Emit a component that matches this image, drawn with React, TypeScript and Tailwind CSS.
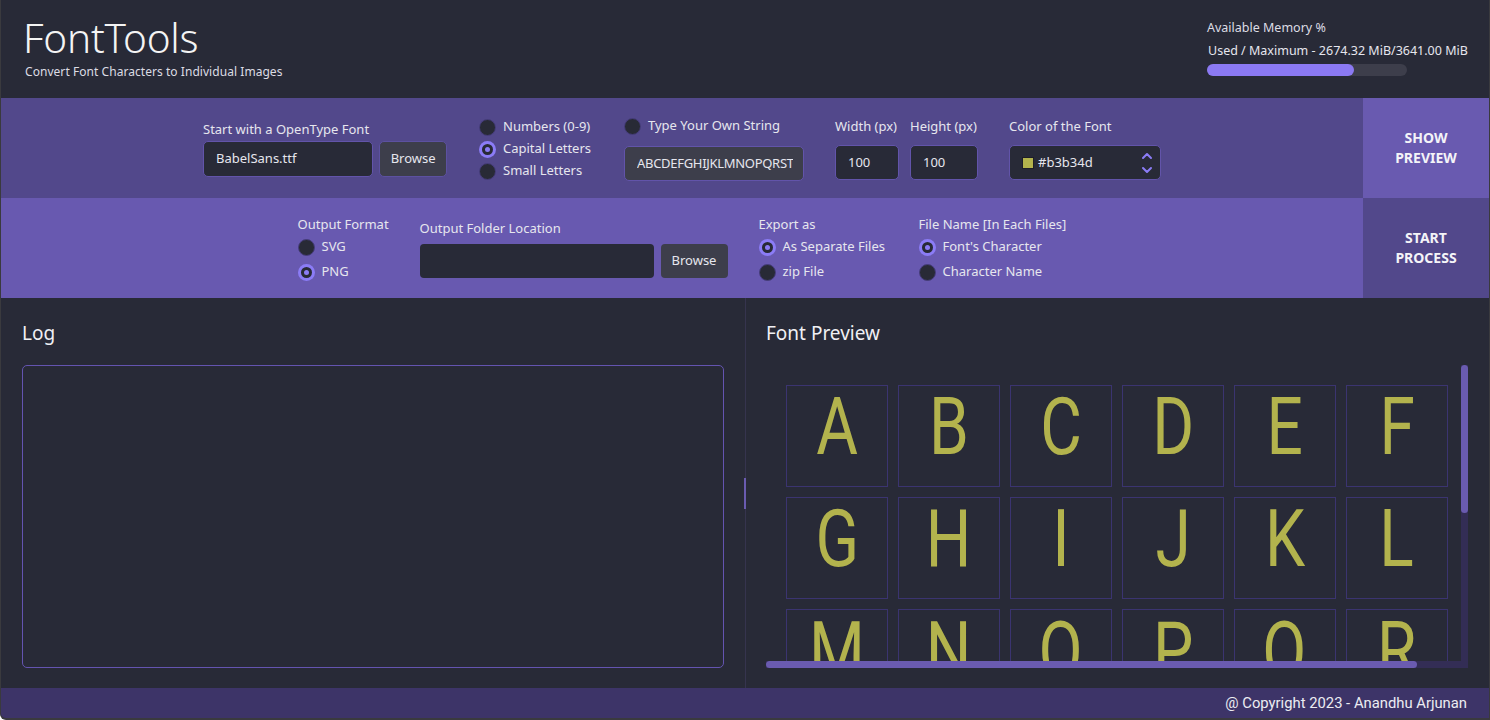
import React from "react";

const F = { fontFamily: '"Noto Sans", "Open Sans", sans-serif' };

function Radio({ checked }: { checked?: boolean }) {
  return checked ? (
    <span className="w-[17px] h-[17px] rounded-full bg-[#8b7cf6] flex items-center justify-center shrink-0">
      <span className="w-[11px] h-[11px] rounded-full bg-[#282a36] flex items-center justify-center">
        <span className="w-[5px] h-[5px] rounded-full bg-[#8b7cf6]" />
      </span>
    </span>
  ) : (
    <span className="w-[17px] h-[17px] rounded-full bg-[#282a36] border border-[#463d7c] shrink-0" />
  );
}

function RadioRow({ checked, label }: { checked?: boolean; label: string }) {
  return (
    <div className="flex items-center gap-[7px] h-[22px]">
      <Radio checked={checked} />
      <span className="text-[13px] text-[#e6e6ee] whitespace-nowrap">{label}</span>
    </div>
  );
}

const letters = "ABCDEFGHIJKLMNOPQR".split("");

export default function App() {
  return (
    <div
      className="w-[1490px] h-[720px] bg-[#282a37] flex flex-col overflow-hidden border-l border-r border-b-2 border-[#3a3a3e] rounded-bl-[6px] text-[#e6e6ee]"
      style={F}
    >
      {/* Header */}
      <div className="h-[98px] flex justify-between shrink-0">
        <div className="pl-[22px] pt-[13px] flex flex-col">
          <div className="text-[40.5px] leading-[49px] font-light text-[#f4f4f4] tracking-[-0.2px]">FontTools</div>
          <div className="text-[12px] leading-[16px] pl-[2px] mt-[2px] text-[#dcdce4] tracking-[0.05px]">
            Convert Font Characters to Individual Images
          </div>
        </div>
        <div className="pr-[21px] pt-[19px] w-[282px] flex flex-col">
          <div className="text-[12.5px] leading-[18px] text-[#dcdce4]">Available Memory %</div>
          <div className="text-[12.5px] leading-[18px] mt-[5px] pl-[1px] text-[#e6e6ee] whitespace-nowrap">
            Used / Maximum - 2674.32 MiB/3641.00 MiB
          </div>
          <div className="mt-[4px] w-[200px] h-[12px] rounded-full bg-[#3d3e4b]">
            <div className="h-full rounded-full bg-[#8b79f3]" style={{ width: "73.5%" }} />
          </div>
        </div>
      </div>

      {/* Row 1 */}
      <div className="h-[100px] flex shrink-0">
        <div className="flex-1 bg-[#52488b] flex items-start justify-center">
          <div className="w-[244px] pt-[22px] flex flex-col">
            <div className="text-[13px] leading-[18px] mb-[3px]">Start with a OpenType Font</div>
            <div className="flex gap-[6px]">
              <div className="w-[171px] h-[36px] rounded-[5px] bg-[#282a37] border border-[#6254aa] flex items-center pl-[12px] text-[13px]">
                BabelSans.ttf
              </div>
              <div className="w-[68px] h-[36px] rounded-[5px] bg-[#3d3e4b] border border-[#5c51a0] flex items-center justify-center text-[13px]">
                Browse
              </div>
            </div>
          </div>
          <div className="w-[113px] ml-[32px] pt-[18px] flex flex-col">
            <RadioRow label="Numbers (0-9)" />
            <RadioRow checked label="Capital Letters" />
            <RadioRow label="Small Letters" />
          </div>
          <div className="w-[180px] ml-[32px] pt-[17px] flex flex-col">
            <RadioRow label="Type Your Own String" />
            <div className="mt-[9px] w-[180px] h-[35px] rounded-[5px] bg-[#3d3e4b] border border-[#6254aa] flex items-center pl-[12px] pr-[10px] overflow-hidden">
              <span className="text-[13px] tracking-[-0.3px] whitespace-nowrap overflow-hidden">ABCDEFGHIJKLMNOPQRSTUVWXYZ</span>
            </div>
          </div>
          <div className="ml-[31px] pt-[19px] flex gap-[11px]">
            <div className="flex flex-col">
              <div className="text-[13px] leading-[18px] mb-[10px] whitespace-nowrap">Width (px)</div>
              <div className="w-[64px] h-[35px] rounded-[5px] bg-[#282a37] border border-[#6254aa] flex items-center pl-[12px] text-[13px]">100</div>
            </div>
            <div className="flex flex-col">
              <div className="text-[13px] leading-[18px] mb-[10px] whitespace-nowrap">Height (px)</div>
              <div className="w-[68px] h-[35px] rounded-[5px] bg-[#282a37] border border-[#6254aa] flex items-center pl-[12px] text-[13px]">100</div>
            </div>
          </div>
          <div className="ml-[31px] pt-[19px] flex flex-col">
            <div className="text-[13px] leading-[18px] mb-[10px]">Color of the Font</div>
            <div className="w-[152px] h-[35px] rounded-[5px] bg-[#282a37] border border-[#6254aa] flex items-center pl-[12px] pr-[6px] text-[13px]">
              <span className="w-[12px] h-[12px] bg-[#b3b34d] border border-[#1e1e28] mr-[4px]" />
              <span>#b3b34d</span>
              <svg className="ml-auto" width="14" height="26" viewBox="0 0 14 26" fill="none" stroke="#8b7cf6" strokeWidth="2" strokeLinecap="round" strokeLinejoin="round">
                <path d="M3 8 L7 4 L11 8" />
                <path d="M3 18 L7 22 L11 18" />
              </svg>
            </div>
          </div>
        </div>
        <div className="w-[126px] bg-[#695ab0] flex items-center justify-center text-center text-[14px] leading-[20px] font-bold text-[#f4f4f8]">
          SHOW
          <br />
          PREVIEW
        </div>
      </div>

      {/* Row 2 */}
      <div className="h-[100px] flex shrink-0">
        <div className="flex-1 bg-[#6859b0] flex items-start justify-center">
          <div className="w-[92px] pt-[17px] flex flex-col">
            <div className="text-[13px] leading-[18px] mb-[3px] whitespace-nowrap">Output Format</div>
            <div className="flex flex-col gap-[3px]">
              <RadioRow label="SVG" />
              <RadioRow checked label="PNG" />
            </div>
          </div>
          <div className="w-[308px] ml-[30px] pt-[21px] flex flex-col">
            <div className="text-[13px] leading-[18px] mb-[7px]">Output Folder Location</div>
            <div className="flex gap-[7px]">
              <div className="w-[234px] h-[34px] rounded-[4px] bg-[#282a37]" />
              <div className="w-[67px] h-[34px] rounded-[4px] bg-[#3d3e4b] flex items-center justify-center text-[13px]">Browse</div>
            </div>
          </div>
          <div className="w-[128px] ml-[31px] pt-[17px] flex flex-col">
            <div className="text-[13px] leading-[18px] mb-[3px]">Export as</div>
            <div className="flex flex-col gap-[3px]">
              <RadioRow checked label="As Separate Files" />
              <RadioRow label="zip File" />
            </div>
          </div>
          <div className="w-[148px] ml-[32px] pt-[17px] flex flex-col">
            <div className="text-[13px] leading-[18px] mb-[3px] whitespace-nowrap">File Name [In Each Files]</div>
            <div className="flex flex-col gap-[3px]">
              <RadioRow checked label="Font's Character" />
              <RadioRow label="Character Name" />
            </div>
          </div>
        </div>
        <div className="w-[126px] bg-[#52488b] flex items-center justify-center text-center text-[14px] leading-[20px] font-bold text-[#f4f4f8]">
          START
          <br />
          PROCESS
        </div>
      </div>

      {/* Main */}
      <div className="flex-1 flex min-h-0">
        <div className="w-[744px] flex flex-col pl-[21px] pr-[21px] pt-[20px] pb-[20px]">
          <div className="text-[19px] leading-[30px] text-[#f0f0f4]">Log</div>
          <div className="mt-[17px] flex-1 rounded-[5px] border border-[#6454b0]" />
        </div>
        <div className="w-[1px] bg-[#36344e] relative">
          <div className="absolute left-[-1px] top-[180px] w-[2px] h-[31px] bg-[#6a5bb0]" />
        </div>
        <div className="flex-1 flex flex-col pl-[20px] pr-[21px] pt-[20px] pb-[20px]">
          <div className="text-[19px] leading-[30px] text-[#f0f0f4]">Font Preview</div>
          <div className="mt-[17px] flex-1 relative overflow-hidden">
            <div className="pl-[20px] pt-[20px] grid grid-cols-[repeat(6,102px)] gap-[10px]">
              {letters.map((l) => (
                <div
                  key={l}
                  className="w-[102px] h-[102px] border border-[#3b3470] flex justify-center pt-[1px] overflow-hidden"
                >
                  <span
                    className="text-[80px] leading-[80px] text-[#b3b34d] scale-x-[0.8] inline-block"
                    style={{ fontFamily: 'Roboto, "Liberation Sans", sans-serif' }}
                  >
                    {l}
                  </span>
                </div>
              ))}
            </div>
            <div className="absolute right-0 top-0 bottom-0 w-[7px] bg-[#332d55]">
              <div className="w-full h-[148px] rounded-full bg-[#6a5bb0]" />
            </div>
            <div className="absolute left-0 right-0 bottom-0 h-[7px] bg-[#332d55]">
              <div className="h-full w-[651px] rounded-full bg-[#6a5bb0]" />
            </div>
          </div>
        </div>
      </div>

      {/* Footer */}
      <div className="h-[30px] shrink-0 bg-[#3d3468] flex items-center justify-end pr-[22px]">
        <span
          className="text-[14.8px] text-[#ececf2]"
          style={{ fontFamily: 'Roboto, "Noto Sans", sans-serif' }}
        >
          @ Copyright 2023 - Anandhu Arjunan
        </span>
      </div>
    </div>
  );
}
